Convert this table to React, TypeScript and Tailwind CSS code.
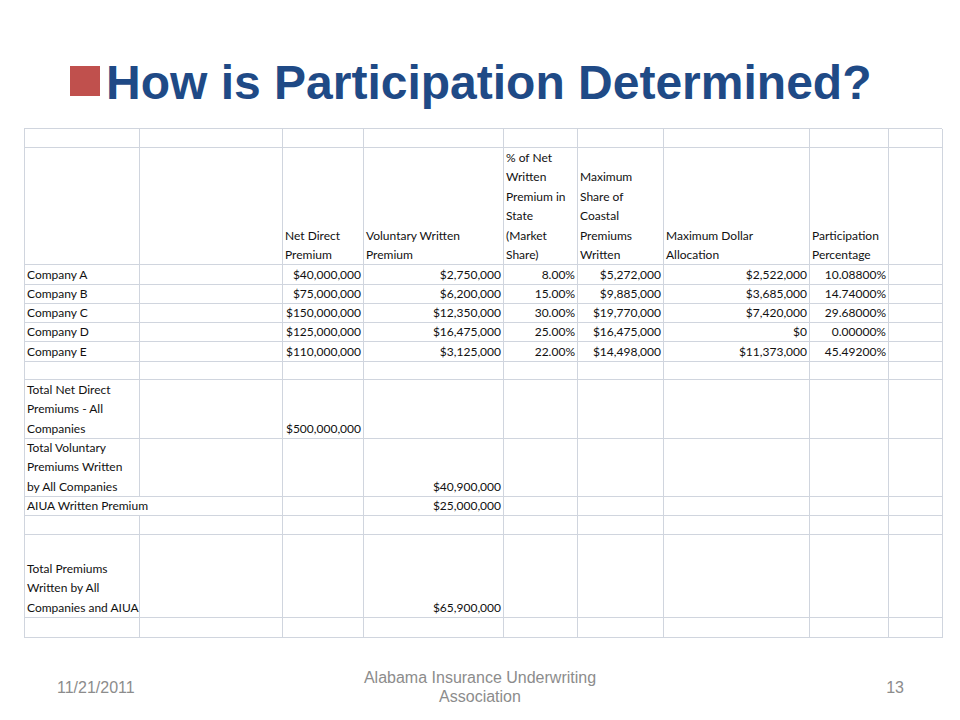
import React from "react";

type Cell = { t?: React.ReactNode; align?: "l" | "r"; span?: number };

const cellFont = { fontFamily: "Lato, 'Open Sans', sans-serif" };

const rowsH = [19, 117, 19, 19, 19, 20, 19, 19, 58, 58, 19, 20, 83, 20];

const E: Cell = {};

const L = (t: React.ReactNode): Cell => ({ t, align: "l" });
const R = (t: React.ReactNode): Cell => ({ t, align: "r" });

const lines = (...ls: string[]) => (
  <>
    {ls.map((l, i) => (
      <div key={i}>{l}</div>
    ))}
  </>
);

const data: Cell[][] = [
  [E, E, E, E, E, E, E, E, E],
  [
    E,
    E,
    L(lines("Net Direct", "Premium")),
    L(lines("Voluntary Written", "Premium")),
    L(lines("% of Net", "Written", "Premium in", "State", "(Market", "Share)")),
    L(lines("Maximum", "Share of", "Coastal", "Premiums", "Written")),
    L(lines("Maximum Dollar", "Allocation")),
    L(lines("Participation", "Percentage")),
    E,
  ],
  [L("Company A"), E, R("$40,000,000"), R("$2,750,000"), R("8.00%"), R("$5,272,000"), R("$2,522,000"), R("10.08800%"), E],
  [L("Company B"), E, R("$75,000,000"), R("$6,200,000"), R("15.00%"), R("$9,885,000"), R("$3,685,000"), R("14.74000%"), E],
  [L("Company C"), E, R("$150,000,000"), R("$12,350,000"), R("30.00%"), R("$19,770,000"), R("$7,420,000"), R("29.68000%"), E],
  [L("Company D"), E, R("$125,000,000"), R("$16,475,000"), R("25.00%"), R("$16,475,000"), R("$0"), R("0.00000%"), E],
  [L("Company E"), E, R("$110,000,000"), R("$3,125,000"), R("22.00%"), R("$14,498,000"), R("$11,373,000"), R("45.49200%"), E],
  [E, E, E, E, E, E, E, E, E],
  [L(lines("Total Net Direct", "Premiums - All", "Companies")), E, R("$500,000,000"), E, E, E, E, E, E],
  [L(lines("Total Voluntary", "Premiums Written", "by All Companies")), E, E, R("$40,900,000"), E, E, E, E, E],
  [{ t: "AIUA Written Premium", align: "l", span: 2 }, E, R("$25,000,000"), E, E, E, E, E],
  [E, E, E, E, E, E, E, E, E],
  [L(lines("Total Premiums", "Written by All", "Companies and AIUA")), E, E, R("$65,900,000"), E, E, E, E, E],
  [E, E, E, E, E, E, E, E, E],
];

function Sheet() {
  return (
    <div
      className="grid w-[918px] border-t border-l border-[#d0d5de] text-[12px] leading-[19.4px] text-[#111]"
      style={cellFont}
    >
      {data.map((row, ri) => (
        <div
          key={ri}
          className="grid grid-cols-[115px_143px_81px_140px_74px_86px_146px_79px_54px]"
          style={{ height: rowsH[ri] }}
        >
          {row.map((c, ci) => (
            <div
              key={ci}
              className={
                "flex flex-col justify-end border-r border-b border-[#d0d5de] overflow-visible whitespace-nowrap " +
                (c.align === "r" ? "items-end pr-[2px]" : "items-start pl-[2px]") +
                (c.span === 2 ? " col-span-2" : "")
              }
            >
              {c.t ? <div className={c.align === "r" ? "text-right" : "text-left"}>{c.t}</div> : null}
            </div>
          ))}
        </div>
      ))}
    </div>
  );
}

export default function App() {
  return (
    <div className="w-[960px] h-[720px] bg-white flex flex-col overflow-hidden">
      <div className="h-[128px] flex items-start pl-[70px] pt-[59px]">
        <div className="w-[30px] h-[30px] bg-[#c0504d] mt-[7px] shrink-0"></div>
        <div
          className="ml-[6px] text-[48px] leading-[48px] font-bold text-[#1f4a86] whitespace-nowrap"
          style={{ fontFamily: "'Liberation Sans', Arial, sans-serif" }}
        >
          How is Participation Determined?
        </div>
      </div>
      <div className="pl-[24px]">
        <Sheet />
      </div>
      <div
        className="mt-[30px] grid grid-cols-[1fr_auto_1fr] items-center text-[16px] leading-[19px] text-[#8c8c8c]"
        style={{ fontFamily: "'Liberation Sans', Arial, sans-serif" }}
      >
        <div className="pl-[57px]">11/21/2011</div>
        <div className="text-center">
          <div>Alabama Insurance Underwriting</div>
          <div>Association</div>
        </div>
        <div className="text-right pr-[56px]">13</div>
      </div>
    </div>
  );
}
